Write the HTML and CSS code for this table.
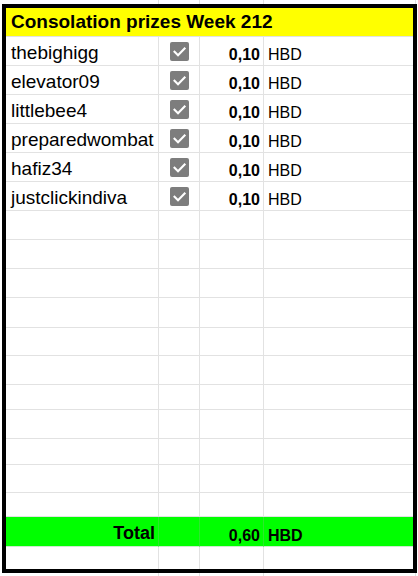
FILE: index.html
```html
<!DOCTYPE html>
<html>
<head>
<meta charset="utf-8">
<link rel="stylesheet" href="styles.css">
</head>
<body>
<div class="sheet">
  <div class="cell header">Consolation prizes Week 212</div>

  <div class="cell name">thebighigg</div>
  <div class="cell check"><span class="box"><svg viewBox="0 0 18 18"><path d="M4.3 9.3 L7.6 12.5 L13.8 6.2"/></svg></span></div>
  <div class="cell num">0,10</div>
  <div class="cell cur">HBD</div>

  <div class="cell name">elevator09</div>
  <div class="cell check"><span class="box"><svg viewBox="0 0 18 18"><path d="M4.3 9.3 L7.6 12.5 L13.8 6.2"/></svg></span></div>
  <div class="cell num">0,10</div>
  <div class="cell cur">HBD</div>

  <div class="cell name">littlebee4</div>
  <div class="cell check"><span class="box"><svg viewBox="0 0 18 18"><path d="M4.3 9.3 L7.6 12.5 L13.8 6.2"/></svg></span></div>
  <div class="cell num">0,10</div>
  <div class="cell cur">HBD</div>

  <div class="cell name">preparedwombat</div>
  <div class="cell check"><span class="box"><svg viewBox="0 0 18 18"><path d="M4.3 9.3 L7.6 12.5 L13.8 6.2"/></svg></span></div>
  <div class="cell num">0,10</div>
  <div class="cell cur">HBD</div>

  <div class="cell name">hafiz34</div>
  <div class="cell check"><span class="box"><svg viewBox="0 0 18 18"><path d="M4.3 9.3 L7.6 12.5 L13.8 6.2"/></svg></span></div>
  <div class="cell num">0,10</div>
  <div class="cell cur">HBD</div>

  <div class="cell name">justclickindiva</div>
  <div class="cell check"><span class="box"><svg viewBox="0 0 18 18"><path d="M4.3 9.3 L7.6 12.5 L13.8 6.2"/></svg></span></div>
  <div class="cell num">0,10</div>
  <div class="cell cur">HBD</div>

  <div class="cell"></div><div class="cell"></div><div class="cell"></div><div class="cell"></div>
  <div class="cell"></div><div class="cell"></div><div class="cell"></div><div class="cell"></div>
  <div class="cell"></div><div class="cell"></div><div class="cell"></div><div class="cell"></div>
  <div class="cell"></div><div class="cell"></div><div class="cell"></div><div class="cell"></div>
  <div class="cell"></div><div class="cell"></div><div class="cell"></div><div class="cell"></div>
  <div class="cell"></div><div class="cell"></div><div class="cell"></div><div class="cell"></div>
  <div class="cell"></div><div class="cell"></div><div class="cell"></div><div class="cell"></div>
  <div class="cell"></div><div class="cell"></div><div class="cell"></div><div class="cell"></div>
  <div class="cell"></div><div class="cell"></div><div class="cell"></div><div class="cell"></div>
  <div class="cell"></div><div class="cell"></div><div class="cell"></div><div class="cell"></div>
  <div class="cell"></div><div class="cell"></div><div class="cell"></div><div class="cell"></div>

  <div class="cell total label">Total</div>
  <div class="cell total"></div>
  <div class="cell total num">0,60</div>
  <div class="cell total cur">HBD</div>

  <div class="cell last"></div><div class="cell last"></div><div class="cell last"></div><div class="cell last"></div>
</div>
</body>
</html>
```

FILE: styles.css
```css
html, body {
  margin: 0;
  padding: 0;
}

body {
  width: 418px;
  height: 576px;
  overflow: hidden;
  background-color: #fff;
  background-image:
    linear-gradient(to right, transparent 158px, #e2e2e2 158px, #e2e2e2 159px, transparent 159px),
    linear-gradient(to right, transparent 199px, #e2e2e2 199px, #e2e2e2 200px, transparent 200px),
    linear-gradient(to right, transparent 263px, #e2e2e2 263px, #e2e2e2 264px, transparent 264px),
    linear-gradient(to right, transparent 415px, #e2e2e2 415px, #e2e2e2 416px, transparent 416px);
  font-family: "Liberation Sans", Arial, sans-serif;
  color: #000;
}

.sheet {
  box-sizing: border-box;
  width: 415px;
  height: 569px;
  margin: 4px 0 0 2px;
  border: 4px solid #000;
  background: #fff;
  display: grid;
  grid-template-columns: 153px 41px 64px 149px;
  grid-template-rows:
    29px
    29px 29px 29px 29px 29px 29px
    29px 29px 29px 30px 28px 29px 25px 29px 26px 28px 24px
    30px
    22px;
}

.cell {
  box-sizing: border-box;
  border-right: 1px solid #e2e2e2;
  border-bottom: 1px solid #e2e2e2;
  display: flex;
  align-items: flex-end;
  overflow: hidden;
  white-space: nowrap;
}

.cell:nth-child(4n+1) {
  border-right: none;
}

.header {
  grid-column: 1 / 5;
  background: #ffff00;
  font-weight: bold;
  font-size: 19px;
  line-height: 22px;
  padding-left: 5px;
  align-items: center;
  border-right: none;
}

.name {
  font-size: 19px;
  line-height: 22px;
  padding: 0 0 1px 5px;
}

.check {
  align-items: center;
  justify-content: center;
}

.box {
  width: 19px;
  height: 19px;
  border-radius: 2px;
  background: #7d7d7d;
  display: flex;
}

.box svg {
  width: 19px;
  height: 19px;
}

.box path {
  fill: none;
  stroke: #fff;
  stroke-width: 2;
  stroke-linecap: square;
}

.num {
  font-weight: bold;
  font-size: 16px;
  line-height: 18px;
  justify-content: flex-end;
  padding: 0 3px 1px 0;
}

.cur {
  font-size: 16px;
  line-height: 18px;
  padding: 0 0 1px 4px;
}

.total {
  background: #00ff00;
  border-right-color: #2ce82c;
  border-bottom-color: #cfe9cf;
}

.total.label {
  font-weight: bold;
  font-size: 18px;
  line-height: 21px;
  justify-content: flex-end;
  padding: 0 3px 2px 0;
}

.total.cur {
  font-weight: bold;
  border-right: none;
}

.last {
  border-bottom: none;
}

.cell:nth-child(4n+1).last,
.cell:nth-child(4n+1).total {
  border-right: none;
}
```
